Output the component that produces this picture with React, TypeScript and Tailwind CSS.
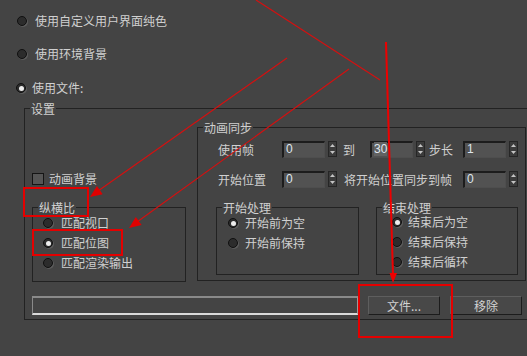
import React from "react";

function Radio({ on = false }: { on?: boolean }) {
  return (
    <span className="flex h-[10px] w-[10px] shrink-0 items-center justify-center rounded-full border border-[#101010] bg-[#2c2c2c] shadow-[1px_1px_0_#5c5c5c]">
      {on ? <span className="h-[5px] w-[5px] rounded-full bg-[#ededed]" /> : null}
    </span>
  );
}

function Group({ label, className = "", children }: { label: string; className?: string; children?: React.ReactNode }) {
  return (
    <div className={`shrink-0 border border-[#222222] ${className}`}>
      <div className="-mt-[7px] ml-[5px] h-[14px] w-fit bg-[#444444] px-[1px] leading-[14px]">{label}</div>
      {children}
    </div>
  );
}

function Spinner({ value, sel = false }: { value: string; sel?: boolean }) {
  return (
    <div className="flex shrink-0 items-start">
      <div className="h-[17px] w-[43px] border-t-2 border-l-2 border-b border-r border-t-[#1c1c1c] border-l-[#1c1c1c] border-b-[#4e4e4e] border-r-[#4e4e4e] bg-[#525252] pl-[2px] font-['Liberation_Sans',sans-serif] text-[12px] leading-[13px] text-[#dfe6ee]">
        <span className={sel ? "bg-[#626262]" : ""}>{value}</span>
      </div>
      <div className="ml-[3px] flex h-[16px] w-[9px] flex-col items-center justify-between border border-[#262626] bg-[#3b3b3b] py-[2px]">
        <svg width="5" height="3" viewBox="0 0 5 3">
          <path d="M2.5 0L5 3H0Z" fill="#c4c4c4" />
        </svg>
        <svg width="5" height="3" viewBox="0 0 5 3">
          <path d="M0 0H5L2.5 3Z" fill="#c4c4c4" />
        </svg>
      </div>
    </div>
  );
}

function RadioRow({ label, on = false, gap }: { label: string; on?: boolean; gap: string }) {
  return (
    <div className={`flex h-[20px] items-center ${gap}`}>
      <Radio on={on} />
      <span>{label}</span>
    </div>
  );
}

export default function App() {
  return (
    <div className="relative h-[356px] w-[527px] overflow-hidden bg-[#444444] font-['Noto_Sans_CJK_SC',sans-serif] text-[12px] leading-[14px] text-[#d0d0d0]">
      <div className="flex flex-col pt-[13px]">
        <div className="flex h-[16px] items-center gap-[8px] pl-[17px]">
          <Radio />
          <span>使用自定义用户界面纯色</span>
        </div>
        <div className="mt-[17px] flex h-[16px] items-center gap-[8px] pl-[17px]">
          <Radio />
          <span>使用环境背景</span>
        </div>
        <div className="mt-[18px] flex h-[16px] items-center gap-[6px] pl-[16px]">
          <Radio on />
          <span>使用文件:</span>
        </div>
      </div>

      <Group label="设置" className="ml-[24px] mt-[12px] h-[212px] w-[540px]">
        <div className="mt-[11px] flex items-start">
          <div className="w-[172px] shrink-0 pl-[7px] pt-[46px]">
            <div className="flex h-[12px] items-center gap-[5px]">
              <span className="h-[12px] w-[12px] border border-[#151515] bg-[#555555]" />
              <span>动画背景</span>
            </div>
            <Group label="纵横比" className="mt-[22px] h-[75px] w-[154px]">
              <div className="-mt-[2px] pl-[10px]">
                <RadioRow label="匹配视口" gap="gap-[8px]" />
                <RadioRow label="匹配位图" on gap="gap-[8px]" />
                <RadioRow label="匹配渲染输出" gap="gap-[8px]" />
              </div>
            </Group>
          </div>

          <Group label="动画同步" className="h-[154px] w-[329px]">
            <div className="mt-[6px] flex h-[17px] items-center pl-[20px]">
              <span className="w-[64px] shrink-0">使用帧</span>
              <Spinner value="0" />
              <span className="w-[33px] shrink-0 pl-[6px]">到</span>
              <Spinner value="30" sel />
              <span className="w-[38px] shrink-0 pl-[4px]">步长</span>
              <Spinner value="1" />
            </div>
            <div className="mt-[13px] flex h-[17px] items-center pl-[20px]">
              <span className="w-[64px] shrink-0">开始位置</span>
              <Spinner value="0" />
              <span className="w-[126px] shrink-0 pl-[7px]">将开始位置同步到帧</span>
              <Spinner value="0" />
            </div>
            <div className="mt-[19px] flex gap-[17px] pl-[18px]">
              <Group label="开始处理" className="h-[68px] w-[143px]">
                <div className="-mt-[2px] pl-[11px]">
                  <RadioRow label="开始前为空" on gap="gap-[7px]" />
                  <RadioRow label="开始前保持" gap="gap-[7px]" />
                </div>
              </Group>
              <Group label="结束处理" className="h-[68px] w-[142px]">
                <div className="-mt-[3px] pl-[15px]">
                  <RadioRow label="结束后为空" on gap="gap-[6px]" />
                  <RadioRow label="结束后保持" gap="gap-[6px]" />
                  <RadioRow label="结束后循环" gap="gap-[6px]" />
                </div>
              </Group>
            </div>
          </Group>
        </div>

        <div className="mt-[14px] flex items-start">
          <div className="ml-[7px] h-[19px] w-[326px] border-t-2 border-l border-b-2 border-r border-t-[#8a8a8a] border-l-[#8a8a8a] border-b-[#dadada] border-r-[#9a9a9a]" />
          <button className="ml-[10px] h-[19px] w-[72px] border border-t-[#5e5e5e] border-l-[#5e5e5e] border-b-[#1c1c1c] border-r-[#1c1c1c] bg-[#484848] leading-[16px] text-[#d2d2d2]">
            文件...
          </button>
          <button className="ml-[10px] h-[19px] w-[72px] border border-t-[#5e5e5e] border-l-[#5e5e5e] border-b-[#1c1c1c] border-r-[#1c1c1c] bg-[#484848] leading-[16px] text-[#d2d2d2]">
            移除
          </button>
        </div>
      </Group>

      {/* red annotations */}
      <div className="pointer-events-none absolute left-[23px] top-[187px] h-[30px] w-[66px] border-2 border-[#e40000]" />
      <div className="pointer-events-none absolute left-[32px] top-[229px] h-[27px] w-[91px] border-2 border-[#e40000]" />
      <div className="pointer-events-none absolute left-[358px] top-[284px] h-[54px] w-[95px] border-2 border-[#e40000]" />
      <svg className="pointer-events-none absolute inset-0" width="527" height="356" viewBox="0 0 527 356">
        <line x1="256" y1="0" x2="380" y2="80" stroke="#d41010" strokeWidth="1.2" />
        <line x1="287" y1="58" x2="98" y2="191" stroke="#d41010" strokeWidth="1.2" />
        <polygon points="90,197 102.7,194.2 96.9,186" fill="#e00000" />
        <line x1="349" y1="69" x2="137" y2="222" stroke="#d41010" strokeWidth="1.2" />
        <polygon points="129,228 141.6,225.1 135.8,217" fill="#e00000" />
        <line x1="386" y1="42" x2="393" y2="275" stroke="#ee0000" strokeWidth="2" />
        <polygon points="393,283 389.5,273 397,273" fill="#ee0000" />
      </svg>
    </div>
  );
}
